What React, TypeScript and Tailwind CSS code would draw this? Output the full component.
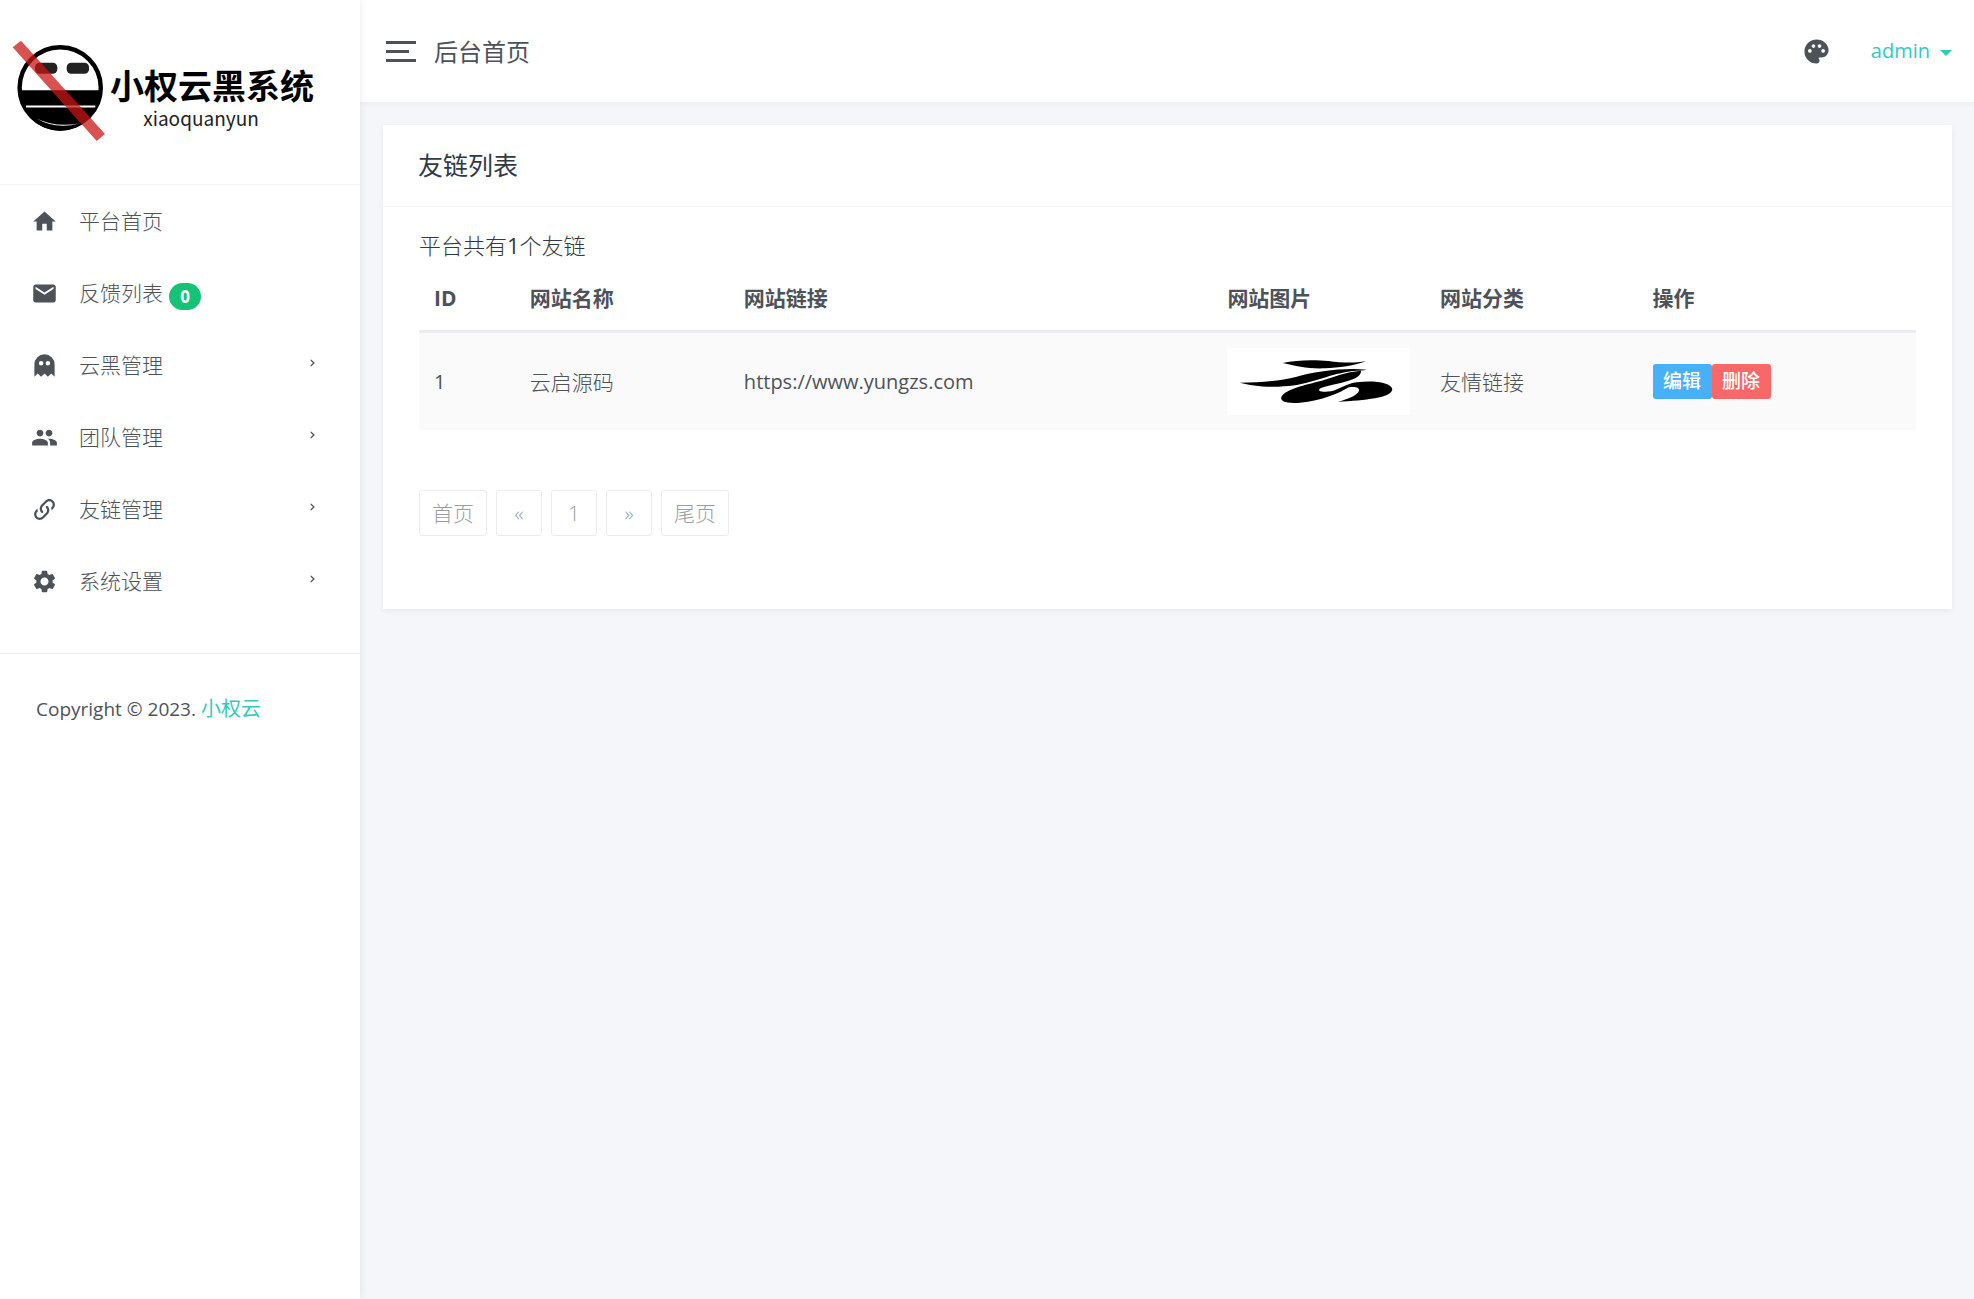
import { MdHome, MdEmail, MdPeople, MdSettings, MdPalette } from 'react-icons/md';

const navItems = [
  { label: '平台首页', icon: <MdHome size={27} /> },
  { label: '反馈列表', icon: <MdEmail size={27} />, badge: 0 },
  { label: '云黑管理', icon: <GhostIcon />, hasSub: true },
  { label: '团队管理', icon: <MdPeople size={27} />, hasSub: true },
  { label: '友链管理', icon: <LinkIcon />, hasSub: true },
  { label: '系统设置', icon: <MdSettings size={27} />, hasSub: true },
];

const links = [{ id: 1, name: '云启源码', url: 'https://www.yungzs.com', category: '友情链接' }];

const pages = ['首页', '«', '1', '»', '尾页'];

function GhostIcon() {
  return (
    <svg className="size-[27px]" viewBox="0 0 24 24" fill="currentColor" aria-hidden="true">
      <path d="M12 2a9 9 0 0 0-9 9v11l3-3 3 3 3-3 3 3 3-3 3 3V11a9 9 0 0 0-9-9M9 8a2 2 0 0 1 2 2 2 2 0 0 1-2 2 2 2 0 0 1-2-2 2 2 0 0 1 2-2m6 0a2 2 0 0 1 2 2 2 2 0 0 1-2 2 2 2 0 0 1-2-2 2 2 0 0 1 2-2z" />
    </svg>
  );
}

function LinkIcon() {
  return (
    <svg className="size-[27px]" viewBox="0 0 24 24" fill="currentColor" aria-hidden="true">
      <path d="M10.59 13.41C11 13.8 11 14.44 10.59 14.83 10.2 15.22 9.56 15.22 9.17 14.83 7.22 12.88 7.22 9.71 9.17 7.76L12.71 4.22C14.66 2.27 17.83 2.27 19.78 4.22 21.73 6.17 21.73 9.34 19.78 11.29L18.29 12.78C18.3 11.96 18.17 11.14 17.89 10.36L18.36 9.88C19.54 8.71 19.54 6.81 18.36 5.64 17.19 4.46 15.29 4.46 14.12 5.64L10.59 9.17C9.41 10.34 9.41 12.24 10.59 13.41M13.41 9.17C13.8 8.78 14.44 8.78 14.83 9.17 16.78 11.12 16.78 14.29 14.83 16.24L11.29 19.78C9.34 21.73 6.17 21.73 4.22 19.78 2.27 17.83 2.27 14.66 4.22 12.71L5.71 11.22C5.7 12.04 5.83 12.86 6.11 13.65L5.64 14.12C4.46 15.29 4.46 17.19 5.64 18.36 6.81 19.54 8.71 19.54 9.88 18.36L13.41 14.83C14.59 13.66 14.59 11.76 13.41 10.59 13 10.2 13 9.56 13.41 9.17Z" />
    </svg>
  );
}

function Logo() {
  return (
    <a href="#" className="flex h-[184px] items-start gap-[2px] pl-3 pt-10 text-black">
      <svg className="h-[102px] w-[96px] shrink-0" viewBox="12 40 96 102" aria-hidden="true">
        <circle cx="60.2" cy="87.8" r="40.6" fill="#fff" stroke="#000" strokeWidth="4.4" />
        <path d="M19.6 90.3h81.2a40.6 40.6 0 0 1-81.2 0z" />
        <path d="M26 106.5h69.3" stroke="#fff" strokeWidth="2.2" />
        <path d="M36.5 118.5Q56 130 80 123.2Q56 128 36.5 118.5z" fill="#fff" />
        <rect x="35" y="62.7" width="22.3" height="11" rx="4.5" fill="#222" />
        <rect x="66.7" y="62.7" width="22.3" height="11" rx="4.5" fill="#222" />
        <path d="M12.7 47.3L21 40.7L105 134L96.7 141z" fill="#cc1515" fillOpacity=".74" />
      </svg>
      <span className="flex flex-col items-center pt-6 font-['Noto_Sans_CJK_SC',sans-serif]">
        <span className="text-[34px] font-bold leading-[42px]">小权云黑系统</span>
        <span className="pr-[22px] text-[19px] font-normal leading-6 text-[#222]">xiaoquanyun</span>
      </span>
    </a>
  );
}

function Sidebar() {
  return (
    <aside className="z-10 w-[360px] shrink-0 bg-white shadow-[0_0_8px_rgba(0,0,0,0.09)]">
      <Logo />
      <nav className="border-y border-[#f3f4f5] pb-9">
        <ul>
          {navItems.map((item) => (
            <li key={item.label}>
              <a href="#" className="flex h-[72px] items-center pl-[31px] pr-[45px] hover:bg-gray-50">
                {item.icon}
                <span className="ml-[21px]">{item.label}</span>
                {item.badge !== undefined && (
                  <span className="ml-[6px] mt-[7px] flex h-[27px] w-8 items-center justify-center rounded-full bg-[#15c377] text-[17px] font-bold text-white">
                    {item.badge}
                  </span>
                )}
                {item.hasSub && (
                  <svg className="mb-1 ml-auto h-2 w-[5px]" viewBox="0 0 5 8" fill="none" aria-hidden="true">
                    <path d="M.7.9L3.9 4L.7 7.1" stroke="#4d5259" strokeWidth="1.3" />
                  </svg>
                )}
              </a>
            </li>
          ))}
        </ul>
      </nav>
      <p className="px-9 py-[39px] text-[19px] font-medium leading-8">
        Copyright © 2023.{' '}
        <a href="#" className="text-[20px] font-normal text-[#33cabb]">小权云</a>
      </p>
    </aside>
  );
}

function Header() {
  return (
    <header className="flex h-[102px] items-center bg-white pl-[26px] pr-[22px] shadow-[0_2px_6px_rgba(0,0,0,0.04)]">
      <button type="button" aria-label="菜单" className="flex w-[30px] flex-col gap-[6px]">
        <span className="h-[3px] w-full bg-[#4d5259]" />
        <span className="h-[3px] w-[23px] bg-[#4d5259]" />
        <span className="h-[3px] w-full bg-[#4d5259]" />
      </button>
      <span className="ml-[18px] pt-[2px] text-[24px] font-normal">后台首页</span>
      <button type="button" aria-label="主题" className="ml-auto">
        <MdPalette size={29} />
      </button>
      <button type="button" className="ml-10 flex items-center gap-[10px] text-[20px] font-normal text-[#33cabb]">
        admin
        <span className="mt-1 border-x-[6px] border-t-[6px] border-x-transparent border-t-[#33cabb]" />
      </button>
    </header>
  );
}

function SiteImage() {
  return (
    <svg className="h-[67px] w-[183px] bg-white" viewBox="6 6 549 201" role="img" aria-label="云启源码">
      <path d="M173 51C215 41 270 41 310 45C350 50 385 52 423 46C390 58 340 66 300 67C250 69 215 61 173 51z" />
      <path d="M44 110C110 110 165 104 215 92C275 76 355 65 425 71C405 75 385 73 360 79C325 86 300 95 272 103C235 114 205 121 160 122C110 123 75 118 44 110z" />
      <path d="M408 74C408 84 402 92 385 99C355 112 310 118 288 126C272 135 292 140 318 136C345 131 358 114 395 109C440 102 500 108 502 130C500 156 420 163 338 168C365 160 398 148 402 134C404 123 388 121 372 124C345 140 290 165 225 170C185 173 165 167 169 153C182 128 240 117 290 104C330 92 360 78 408 74z" />
    </svg>
  );
}

export default function App() {
  return (
    <div className="flex min-h-screen bg-[#f5f6fa] font-['Open_Sans','Noto_Sans_CJK_SC',sans-serif] text-[21px] font-light leading-8 text-[#4d5259]">
      <Sidebar />
      <div className="min-w-0 flex-1">
        <Header />
        <main className="py-[23px] pl-[23px] pr-[22px]">
          <section className="bg-white text-[#313944] shadow-[0_2px_6px_rgba(0,0,0,0.06)]">
            <h4 className="border-b border-[#f3f4f5] px-[35px] py-6 text-[25px] font-normal leading-[33px]">友链列表</h4>
            <div className="px-9 pb-[73px] pt-[22px]">
              <p className="text-[22px]">
                平台共有<span className="font-normal">1</span>个友链
              </p>
              <table className="w-full table-fixed text-left text-[#4d5259]">
                <colgroup>
                  <col className="w-[6.4%]" />
                  <col className="w-[14.3%]" />
                  <col className="w-[32.3%]" />
                  <col className="w-[14.2%]" />
                  <col className="w-[14.2%]" />
                  <col />
                </colgroup>
                <thead className="border-b-3 border-[#ebedf0]">
                  <tr className="font-bold">
                    <th className="px-[15px] pb-4 pt-[21px]">ID</th>
                    <th className="px-[15px] pb-4 pt-[21px]">网站名称</th>
                    <th className="px-[15px] pb-4 pt-[21px]">网站链接</th>
                    <th className="px-[15px] pb-4 pt-[21px]">网站图片</th>
                    <th className="px-[15px] pb-4 pt-[21px]">网站分类</th>
                    <th className="px-[15px] pb-4 pt-[21px]">操作</th>
                  </tr>
                </thead>
                <tbody>
                  {links.map((link) => (
                    <tr key={link.id} className="bg-[#fafafa]">
                      <td className="px-[15px] text-[20px] font-normal">{link.id}</td>
                      <td className="px-[15px]">{link.name}</td>
                      <td className="px-[15px] text-[20px] font-normal">{link.url}</td>
                      <td className="px-[15px] py-[15px]">
                        <SiteImage />
                      </td>
                      <td className="px-[15px]">{link.category}</td>
                      <td className="px-[15px]">
                        <div className="flex text-center text-[19px] font-medium leading-[35px] text-white">
                          <a href="#" className="min-w-[59px] rounded-[3px] bg-[#48b0f7] px-[10px]">编辑</a>
                          <a href="#" className="min-w-[59px] rounded-[3px] bg-[#f96868] px-[10px]">删除</a>
                        </div>
                      </td>
                    </tr>
                  ))}
                </tbody>
              </table>
              <ul className="mt-[60px] flex gap-[9px] text-[#999ea3]">
                {pages.map((page) => (
                  <li key={page}>
                    <a href="#" className="flex h-[46px] min-w-[46px] items-center justify-center rounded-[3px] border border-[#ebebeb] px-3">
                      {page}
                    </a>
                  </li>
                ))}
              </ul>
            </div>
          </section>
        </main>
      </div>
    </div>
  );
}
